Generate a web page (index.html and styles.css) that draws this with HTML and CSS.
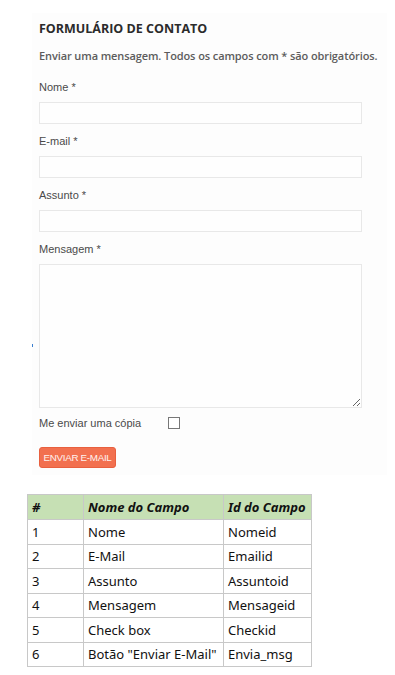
FILE: index.html
```html
<!DOCTYPE html>
<html lang="pt">
<head>
    <meta charset="UTF-8">
    <title>Formulário de Contato</title>
    <link rel="stylesheet" href="styles.css">
</head>
<body>
<div id="contact-panel">
    <h3 class="panel-title">FORMULÁRIO DE CONTATO</h3>
    <p class="panel-note">Enviar uma mensagem. Todos os campos com * são obrigatórios.</p>
    <div class="field">
        <label for="nome">Nome *</label>
        <input type="text" id="nome">
    </div>
    <div class="field">
        <label for="email">E-mail *</label>
        <input type="text" id="email">
    </div>
    <div class="field">
        <label for="assunto">Assunto *</label>
        <input type="text" id="assunto">
    </div>
    <div class="field">
        <label for="mensagem">Mensagem *</label>
        <textarea id="mensagem"></textarea>
    </div>
    <div class="copy-row">
        <span>Me enviar uma cópia</span>
        <span class="check"></span>
    </div>
    <button class="send-button">ENVIAR E-MAIL</button>
    <span class="stray-mark"></span>
</div>

<table class="field-table">
    <tr><th>#</th><th>Nome do Campo</th><th>Id do Campo</th></tr>
    <tr><td>1</td><td>Nome</td><td>Nomeid</td></tr>
    <tr><td>2</td><td>E-Mail</td><td>Emailid</td></tr>
    <tr><td>3</td><td>Assunto</td><td>Assuntoid</td></tr>
    <tr><td>4</td><td>Mensagem</td><td>Mensageid</td></tr>
    <tr><td>5</td><td>Check box</td><td>Checkid</td></tr>
    <tr><td>6</td><td>Botão "Enviar E-Mail"</td><td>Envia_msg</td></tr>
</table>
</body>
</html>
```
FILE: styles.css
```css
body {
    margin: 0;
    background-color: #ffffff;
    font-family: "Liberation Sans", Arial, sans-serif;
}
#contact-panel {
    position: relative;
    margin: 13px 8px 0 32px;
    padding: 7px 0 7px 7px;
    width: 348px;
    background-color: #fdfdfd;
}
.panel-title {
    margin: 0;
    font-family: "Open Sans", sans-serif;
    font-size: 12.5px;
    font-weight: bold;
    color: #2b2b2b;
    line-height: 18px;
}
.panel-note {
    margin: 10px 0 0;
    font-family: "Open Sans", sans-serif;
    font-size: 11px;
    font-weight: 600;
    color: #5c5c5c;
    line-height: 16px;
    letter-spacing: -0.1px;
}
.field {
    margin-top: 16px;
}
.field + .field {
    margin-top: 10px;
}
.field label {
    display: block;
    font-size: 11px;
    color: #4a4a4a;
    line-height: 14px;
    margin-bottom: 8px;
}
.field input,
.field textarea {
    display: block;
    box-sizing: border-box;
    width: 323px;
    height: 22px;
    margin: 0;
    border: 1px solid #e8e8e8;
    background-color: #fefefe;
    border-radius: 0;
    outline: none;
}
.field textarea {
    height: 144px;
    resize: both;
}
.copy-row {
    display: flex;
    align-items: center;
    margin-top: 8px;
    font-size: 11px;
    color: #4a4a4a;
    line-height: 14px;
}
.check {
    display: inline-block;
    width: 10px;
    height: 10px;
    margin-left: 27px;
    border: 1px solid #777;
    background: #fff;
}
.send-button {
    display: block;
    margin-top: 17px;
    width: 77px;
    height: 21px;
    padding: 0;
    border: 1px solid #e8603f;
    border-radius: 3px;
    background-color: #f2704f;
    color: #fff3ef;
    font-family: "Liberation Sans", Arial, sans-serif;
    font-size: 9.8px;
    letter-spacing: -0.3px;
}
.stray-mark {
    position: absolute;
    left: 0;
    top: 331px;
    width: 1px;
    height: 3px;
    background: #3a7fd0;
}
.field-table {
    margin: 19px 0 0 27px;
    border-collapse: collapse;
    font-family: "Noto Sans", "Open Sans", sans-serif;
    font-size: 13px;
    color: #111;
}
.field-table th,
.field-table td {
    border: 1px solid #c8c8c8;
    height: 23.5px;
    padding: 0 4px;
    text-align: left;
    font-weight: normal;
}
.field-table th {
    background-color: #c6e0b4;
    font-style: italic;
    font-weight: bold;
    height: 24px;
}
.field-table tr th:first-child,
.field-table tr td:first-child { width: 47px; }
.field-table tr th:nth-child(2),
.field-table tr td:nth-child(2) { width: 131px; }
.field-table tr th:nth-child(3),
.field-table tr td:nth-child(3) { width: 79px; }
```
